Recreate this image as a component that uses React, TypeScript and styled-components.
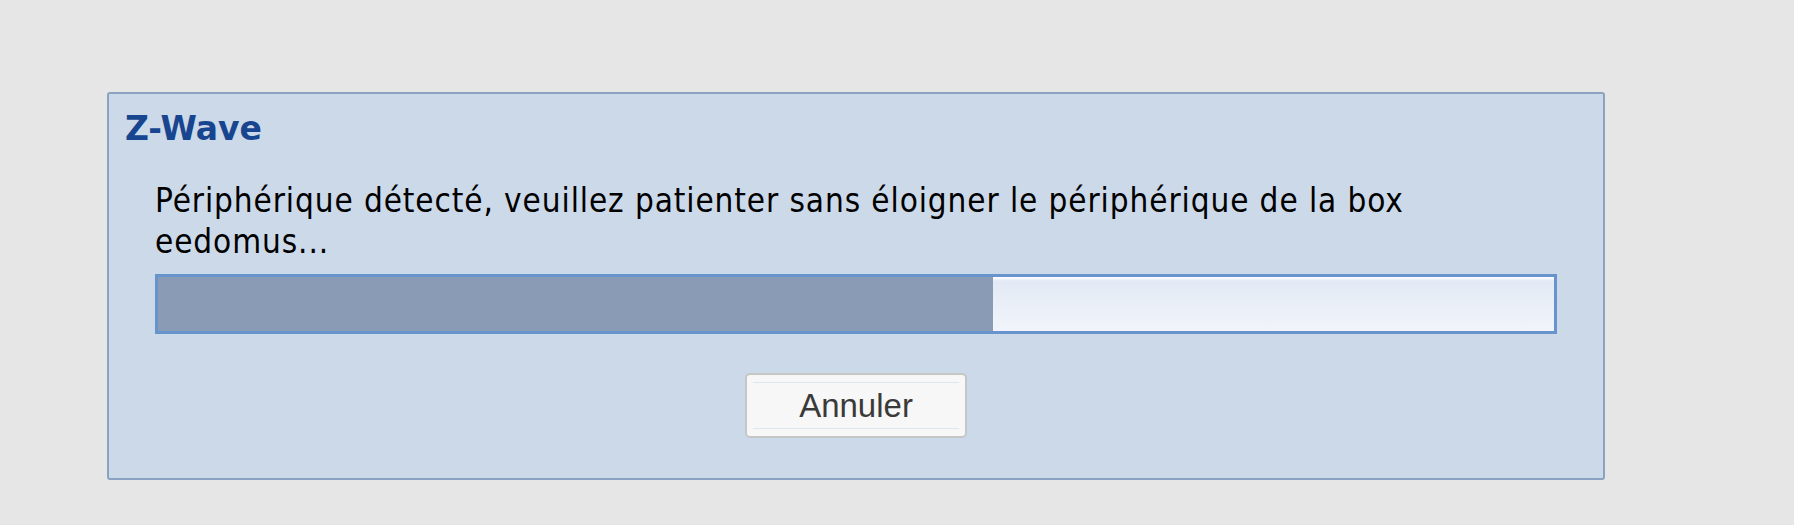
import React from "react";
import styled, { createGlobalStyle } from "styled-components";

const GlobalStyle = createGlobalStyle`
  html, body {
    margin: 0;
    padding: 0;
    background: #e6e6e6;
  }
  * {
    box-sizing: border-box;
  }
`;

const progress = 59.8;

const App = () => {
  return (
    <>
      <GlobalStyle />
      <Page>
        <Dialog>
          <DialogTitle>Z-Wave</DialogTitle>
          <DialogBody>
            <Message>
              Périphérique détecté, veuillez patienter sans éloigner le
              périphérique de la box eedomus...
            </Message>
            <ProgressTrack>
              <ProgressFill style={{ width: `${progress}%` }} />
            </ProgressTrack>
            <Actions>
              <CancelBtn type="button">Annuler</CancelBtn>
            </Actions>
          </DialogBody>
        </Dialog>
      </Page>
    </>
  );
};

export default App;

const Page = styled.div`
  padding: 92px 0 0 107px;
  min-height: 525px;
`;

const Dialog = styled.section`
  width: 1498px;
  height: 388px;
  background: #ccd9e8;
  border: 2px solid #8aa3c3;
  border-radius: 3px;
  display: flex;
  flex-direction: column;
`;

const DialogTitle = styled.h2`
  margin: 16px 0 0 16px;
  font-family: "DejaVu Sans", Verdana, sans-serif;
  font-weight: bold;
  font-size: 33px;
  line-height: 38px;
  color: #17458f;
`;

const DialogBody = styled.div`
  padding: 0 46px;
  display: flex;
  flex-direction: column;
`;

const Message = styled.p`
  margin: 32px 0 0;
  max-width: 1320px;
  font-family: "DejaVu Sans Condensed", "DejaVu Sans", Tahoma, sans-serif;
  font-size: 33px;
  letter-spacing: 0.9px;
  line-height: 41px;
  color: #000;
`;

const ProgressTrack = styled.div`
  margin-top: 12px;
  height: 60px;
  border: 3px solid #6894cd;
  background: linear-gradient(to bottom, #ffffff 0, #e3eaf5 4px, #f1f4fa 100%);
  display: flex;
`;

const ProgressFill = styled.div`
  height: 100%;
  background: #8a9bb5;
`;

const Actions = styled.div`
  margin-top: 39px;
  display: flex;
  justify-content: center;
`;

const CancelBtn = styled.button`
  position: relative;
  width: 222px;
  height: 65px;
  padding: 0;
  border: 2px solid #c6c6c6;
  border-radius: 5px;
  background: #f7f7f7;
  font-family: "Liberation Sans", Arial, sans-serif;
  font-size: 33px;
  color: #3a3a3a;
  cursor: pointer;
  &::before {
    content: "";
    position: absolute;
    inset: 7px 6px;
    border-top: 1px solid #dce5f2;
    border-bottom: 1px solid #dce5f2;
    pointer-events: none;
  }
`;
